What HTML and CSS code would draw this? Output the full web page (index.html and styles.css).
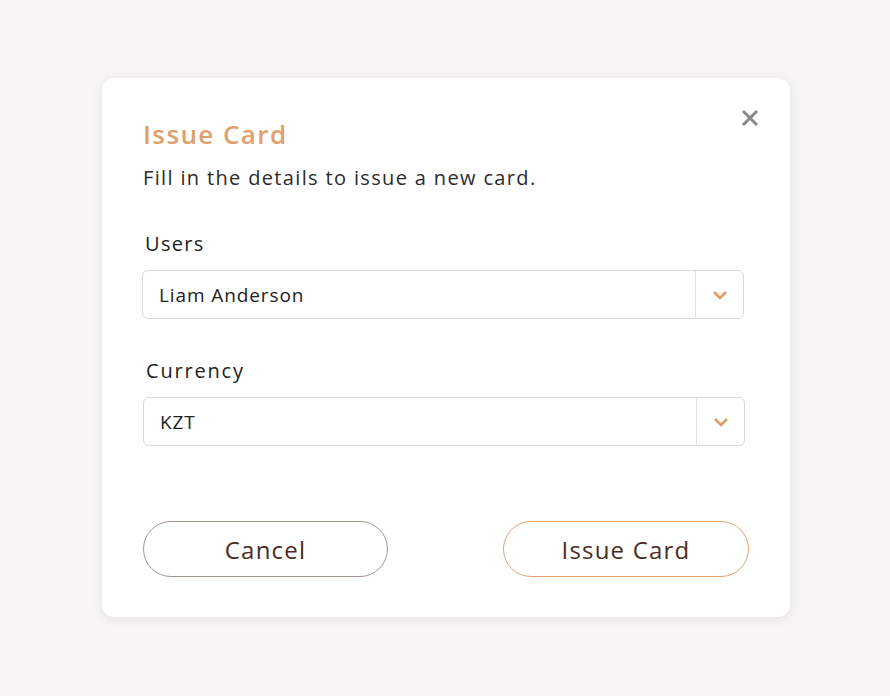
FILE: index.html
```html
<!DOCTYPE html>
<html>
<head>
<meta charset="utf-8">
<link rel="stylesheet" href="styles.css">
</head>
<body>
<div class="page">
  <div class="modal">
    <button class="close" aria-label="Close">
      <svg width="18" height="18" viewBox="0 0 18 18"><path d="M2 2L16 16M16 2L2 16" stroke="#8a8a8a" stroke-width="3" stroke-linecap="butt"/></svg>
    </button>
    <h1 class="title">Issue Card</h1>
    <p class="subtitle">Fill in the details to issue a new card.</p>
    <div class="field field-users">
      <label class="label">Users</label>
      <div class="select">
        <span class="value">Liam Anderson</span>
        <span class="arrow"><svg width="16" height="10" viewBox="0 0 16 10"><path d="M2 2L8 8L14 2" fill="none" stroke="#e09a5e" stroke-width="2.5"/></svg></span>
      </div>
    </div>
    <div class="field field-currency">
      <label class="label">Currency</label>
      <div class="select">
        <span class="value">KZT</span>
        <span class="arrow"><svg width="16" height="10" viewBox="0 0 16 10"><path d="M2 2L8 8L14 2" fill="none" stroke="#e09a5e" stroke-width="2.5"/></svg></span>
      </div>
    </div>
    <div class="actions">
      <button class="btn btn-cancel">Cancel</button>
      <button class="btn btn-issue">Issue Card</button>
    </div>
  </div>
</div>
</body>
</html>
```
FILE: styles.css
```css
html, body {
  margin: 0;
  padding: 0;
  background: #f6f5f4;
  font-family: "Open Sans", "Liberation Sans", sans-serif;
}
.page {
  width: 890px;
  height: 696px;
  padding-top: 78px;
  box-sizing: border-box;
}
.modal {
  position: relative;
  margin-left: 102px;
  width: 688px;
  height: 539px;
  background: #fff;
  border-radius: 12px;
  box-shadow: 0 2px 10px rgba(120, 100, 90, 0.12);
  box-sizing: border-box;
  padding: 38px 41px 0 41px;
}
.close {
  position: absolute;
  top: 31px;
  right: 31px;
  width: 18px;
  height: 18px;
  padding: 0;
  border: 0;
  background: none;
  display: flex;
}
.title {
  margin: 0;
  font-size: 26px;
  font-weight: 600;
  letter-spacing: 1.4px;
  color: #e1a06b;
  line-height: 36px;
}
.subtitle {
  margin: 13px 0 0 0;
  font-size: 20px;
  line-height: 26px;
  color: #2b2b2b;
  letter-spacing: 1.35px;
}
.field {
  display: flex;
  flex-direction: column;
}
.field-users {
  margin-top: 40px;
}
.field-users .select {
  margin-left: -1px;
}
.field-users .label {
  margin-left: 2px;
}
.field-currency {
  margin-top: 39px;
}
.field-currency .label {
  margin-left: 3px;
  letter-spacing: 1.8px;
}
.label {
  font-size: 20px;
  line-height: 26px;
  letter-spacing: 1.3px;
  color: #222;
  margin-bottom: 13px;
}
.select {
  display: flex;
  align-items: stretch;
  width: 602px;
  height: 49px;
  border: 1px solid #d9d9d9;
  border-radius: 6px;
  box-sizing: border-box;
}
.value {
  flex: 1;
  display: flex;
  align-items: center;
  padding-left: 16px;
  font-size: 19px;
  letter-spacing: 0.9px;
  color: #222;
}
.arrow {
  width: 47px;
  border-left: 1px solid #e3e3e3;
  display: flex;
  align-items: center;
  justify-content: center;
}
.actions {
  display: flex;
  justify-content: space-between;
  margin-top: 75px;
  width: 606px;
}
.btn {
  width: 245px;
  height: 56px;
  border-radius: 28px;
  background: #fff;
  font-family: "Open Sans", "Liberation Sans", sans-serif;
  font-size: 24px;
  letter-spacing: 1.2px;
  color: #4a2d1c;
  padding: 0;
}
.btn-cancel {
  border: 1.5px solid #a3958e;
}
.btn-issue {
  width: 246px;
  border: 1.5px solid #e3a36f;
}
```
